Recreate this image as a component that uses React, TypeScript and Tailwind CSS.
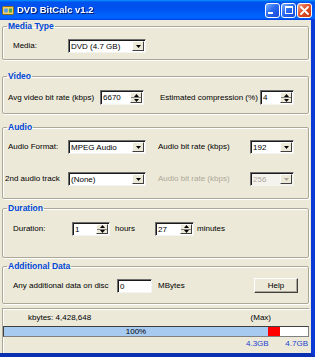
import React from "react"

const font = { fontFamily: '"Liberation Sans", Arial, sans-serif' }

function Arrow({ disabled }: { disabled?: boolean }) {
    return (
        <div className="h-full w-[12px] bg-[#ece9d8] border border-t-white border-l-white border-b-[#404040] border-r-[#404040] flex items-center justify-center">
            <svg width="5" height="3" viewBox="0 0 5 3">
                <path d="M0 0h5L2.5 3z" fill={disabled ? "#aca899" : "#000"} />
            </svg>
        </div>
    )
}

function Spin() {
    return (
        <div className="h-full w-[12px] bg-[#ece9d8] border border-t-white border-l-white border-b-[#404040] border-r-[#404040] flex flex-col">
            <div className="flex-1 flex items-center justify-center border-b border-[#808080]">
                <svg width="5" height="3" viewBox="0 0 5 3"><path d="M0 3h5L2.5 0z" fill="#000" /></svg>
            </div>
            <div className="flex-1 flex items-center justify-center">
                <svg width="5" height="3" viewBox="0 0 5 3"><path d="M0 0h5L2.5 3z" fill="#000" /></svg>
            </div>
        </div>
    )
}

function Field({ w, value, kind, disabled, h = "h-[14px]" }: { w: string; value: string; kind?: "combo" | "spin"; disabled?: boolean; h?: string }) {
    return (
        <div className={`${w} ${h} flex items-stretch border border-t-[#6f6f6f] border-l-[#6f6f6f] border-b-[#f4f4f0] border-r-[#f4f4f0] shadow-[inset_1px_1px_0_#1a1a1a] p-[1px] pl-[2px] ${disabled ? "bg-[#f4f3ee]" : "bg-white"}`}>
            <span className={`flex-1 leading-[11px] text-[8px] ${disabled ? "text-[#aca899]" : "text-black"}`}>{value}</span>
            {kind === "combo" && <Arrow disabled={disabled} />}
            {kind === "spin" && <Spin />}
        </div>
    )
}

function Group({ title, h, mt, children }: { title: string; h: string; mt: string; children: React.ReactNode }) {
    return (
        <fieldset className={`${h} ${mt} border border-[#aca899] rounded-[2px] shadow-[1px_1px_0_#fff,inset_1px_1px_0_#fff] px-0`}>
            <legend className="ml-[4px] px-[1px] text-[8.5px] leading-[12px] font-bold text-[#0046d5]">{title}</legend>
            {children}
        </fieldset>
    )
}

function TitleBtn({ kind }: { kind: "min" | "max" | "close" }) {
    const bg = kind === "close"
        ? "bg-[linear-gradient(135deg,#f0a98f,#e0512b_45%,#c8360f)]"
        : "bg-[linear-gradient(135deg,#7fb1ff,#2a6af0_45%,#1447d8)]"
    return (
        <div className={`w-[15px] h-[15px] rounded-[3px] border border-white ${bg} flex items-center justify-center`}>
            {kind === "min" && <div className="w-[5px] h-[2px] bg-white self-end mb-[3px] mr-[4px]" />}
            {kind === "max" && <div className="w-[8px] h-[8px] border border-white border-t-2" />}
            {kind === "close" && (
                <svg width="9" height="9" viewBox="0 0 9 9">
                    <path d="M1 1l7 7M8 1l-7 7" stroke="#fff" strokeWidth="1.8" strokeLinecap="round" />
                </svg>
            )}
        </div>
    )
}

export default function App() {
    return (
        <div className="w-[315px] h-[357px] flex flex-col bg-[#ece9d8] overflow-hidden" style={font}>
            {/* title bar */}
            <div className="h-[20px] shrink-0 flex items-center bg-[linear-gradient(180deg,#0997ff,#0053ee_10%,#0050ee_40%,#0066ff_85%,#005bff_92%,#003dd7)] pl-[2px] pr-[3px]">
                <svg width="12" height="11" viewBox="0 0 12 11" className="mr-[3px]">
                    <rect x="0.5" y="1.5" width="11" height="8" rx="1" fill="#f2d36b" stroke="#8a6a12" />
                    <circle cx="4" cy="5.5" r="2.2" fill="#5aa0e8" />
                    <rect x="7" y="3.5" width="3" height="4" fill="#4aa84a" />
                </svg>
                <span className="text-white font-bold text-[9.5px] drop-shadow-[1px_1px_0_#0a1e6e]">DVD BitCalc v1.2</span>
                <div className="ml-auto flex gap-[1px]">
                    <TitleBtn kind="min" />
                    <TitleBtn kind="max" />
                    <TitleBtn kind="close" />
                </div>
            </div>

            {/* client */}
            <div className="flex-1 flex flex-col px-[2px] border-r-4 border-b-4 border-r-[#0b3ad6] border-b-[#0a2fb0] text-[8px] text-black">
                <Group title="Media Type" h="h-[40px]" mt="mt-0">
                    <div className="flex items-center mt-[7px] pl-[10px]">
                        <span className="w-[55px]">Media:</span>
                        <Field w="w-[78px]" value="DVD (4.7 GB)" kind="combo" />
                    </div>
                </Group>

                <Group title="Video" h="h-[44px]" mt="mt-[10px]">
                    <div className="flex items-center mt-[8px] pl-[5px]">
                        <span className="w-[92px]">Avg video bit rate (kbps)</span>
                        <Field w="w-[44px]" h="h-[15px]" value="6670" kind="spin" />
                        <span className="ml-[16px] w-[100px]">Estimated compression (%)</span>
                        <Field w="w-[34px]" h="h-[15px]" value="4" kind="spin" />
                    </div>
                </Group>

                <Group title="Audio" h="h-[78px]" mt="mt-[7px]">
                    <div className="flex items-center mt-[7px] pl-[5px]">
                        <span className="w-[60px]">Audio Format:</span>
                        <Field w="w-[78px]" value="MPEG Audio" kind="combo" />
                        <span className="ml-[12px] w-[92px]">Audio bit rate (kbps)</span>
                        <Field w="w-[44px]" value="192" kind="combo" />
                    </div>
                    <div className="flex items-center mt-[18px] pl-[2px]">
                        <span className="w-[63px]">2nd audio track</span>
                        <Field w="w-[78px]" value="(None)" kind="combo" />
                        <span className="ml-[12px] w-[92px] text-[#aca899]">Audio bit rate (kbps)</span>
                        <Field w="w-[44px]" value="256" kind="combo" disabled />
                    </div>
                </Group>

                <Group title="Duration" h="h-[56px]" mt="mt-[3px]">
                    <div className="flex items-center mt-[8px] pl-[10px]">
                        <span className="w-[59px]">Duration:</span>
                        <Field w="w-[38px]" value="1" kind="spin" />
                        <span className="ml-[5px] w-[40px]">hours</span>
                        <Field w="w-[39px]" value="27" kind="spin" />
                        <span className="ml-[3px]">minutes</span>
                    </div>
                </Group>

                <Group title="Additional Data" h="h-[44px]" mt="mt-[2px]">
                    <div className="flex items-center mt-[6px] pl-[10px]">
                        <span className="w-[104px]">Any additional data on disc</span>
                        <Field w="w-[35px]" value="0" />
                        <span className="ml-[6px]">MBytes</span>
                        <button className="ml-auto mr-[10px] w-[44px] h-[15px] bg-[#ece9d8] border border-t-white border-l-white border-b-[#404040] border-r-[#404040] shadow-[inset_-1px_-1px_0_#aca899] text-[8px] leading-none">
                            Help
                        </button>
                    </div>
                </Group>

                {/* status */}
                <div className="mt-[4px] flex-1 flex flex-col border-t border-l border-[#aca899] shadow-[inset_1px_1px_0_#fff]">
                    <div className="flex items-end h-[17px] pb-[2px]">
                        <span className="ml-[25px]">kbytes: 4,428,648</span>
                        <span className="ml-auto mr-[38px]">(Max)</span>
                    </div>
                    <div className="h-[11px] flex border border-t-[#404040] border-l-[#404040] border-b-[#808080] border-r-[#808080]">
                        <div className="w-[264px] bg-[#a6caf0] flex items-center justify-center leading-none">100%</div>
                        <div className="w-[12px] bg-[#ff0000]" />
                        <div className="flex-1 bg-white" />
                    </div>
                    <div className="flex h-[14px] items-center text-[#1c3fd0] pr-[1px]">
                        <span className="ml-[243px]">4.3GB</span>
                        <span className="ml-auto">4.7GB</span>
                    </div>
                </div>
            </div>
        </div>
    )
}
